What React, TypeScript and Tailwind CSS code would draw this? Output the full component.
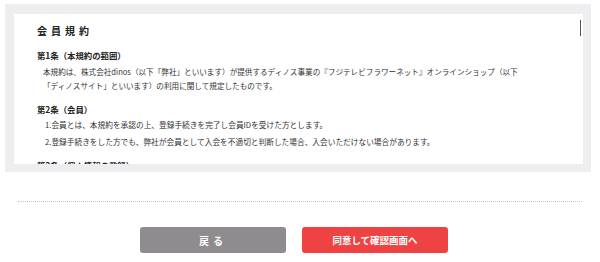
import React from "react";

const font = {
  fontFamily: '"Noto Sans CJK JP", "Noto Sans", sans-serif',
};

const App: React.FC = () => {
  return (
    <div className="w-[600px] h-[262px] bg-white overflow-hidden" style={font}>
      <div className="pt-[4px] pl-[5px] pr-[9px]">
        <div className="h-[168px] border-l-[9px] border-t-[10px] border-r-[8px] border-b-[8px] border-[#eeeef0]">
          <div className="relative h-full overflow-hidden bg-white pl-[23px] pt-[10px] text-[#333]">
            <div className="absolute right-[2px] top-[6px] w-px h-[16px] bg-[#555]" />
            <h2 className="text-[10px] leading-[14px] font-bold tracking-[4px] text-[#222]">
              会員規約
            </h2>

            <h3 className="mt-[10px] text-[8.4px] leading-[14px] font-bold text-[#222]">
              第1条（本規約の範囲）
            </h3>
            <p className="mt-[3px] pl-[6px] text-[7.6px] leading-[14px] whitespace-nowrap">
              本規約は、株式会社dinos（以下「弊社」といいます）が提供するディノス事業の『フジテレビフラワーネット』オンラインショップ（以下
              <br />
              「ディノスサイト」といいます）の利用に関して規定したものです。
            </p>

            <h3 className="mt-[9px] text-[8.4px] leading-[14px] font-bold text-[#222]">
              第2条（会員）
            </h3>
            <ul className="pl-[8px] text-[7.7px] leading-[14px] whitespace-nowrap">
              <li className="mt-[2px]">
                1.会員とは、本規約を承認の上、登録手続きを完了し会員IDを受けた方とします。
              </li>
              <li className="mt-[3px]">
                2.登録手続きをした方でも、弊社が会員として入会を不適切と判断した場合、入会いただけない場合があります。
              </li>
            </ul>

            <h3 className="mt-[9px] text-[8.4px] leading-[14px] font-bold text-[#222]">
              第3条（個人情報の登録）
            </h3>
          </div>
        </div>
      </div>

      <div className="mt-[29px] mx-[18px] border-t border-dotted border-[#c8c8c8]" />

      <div className="mt-[25px] flex justify-center gap-[16px] pr-[12px]">
        <button className="w-[146px] h-[26px] rounded-[3px] bg-[#8f8b8e] text-white text-[10px] font-bold tracking-[4px]">
          戻る
        </button>
        <button className="w-[146px] h-[26px] rounded-[3px] bg-[#ef4343] text-white text-[9.5px] font-bold">
          同意して確認画面へ
        </button>
      </div>
    </div>
  );
};

export default App;
